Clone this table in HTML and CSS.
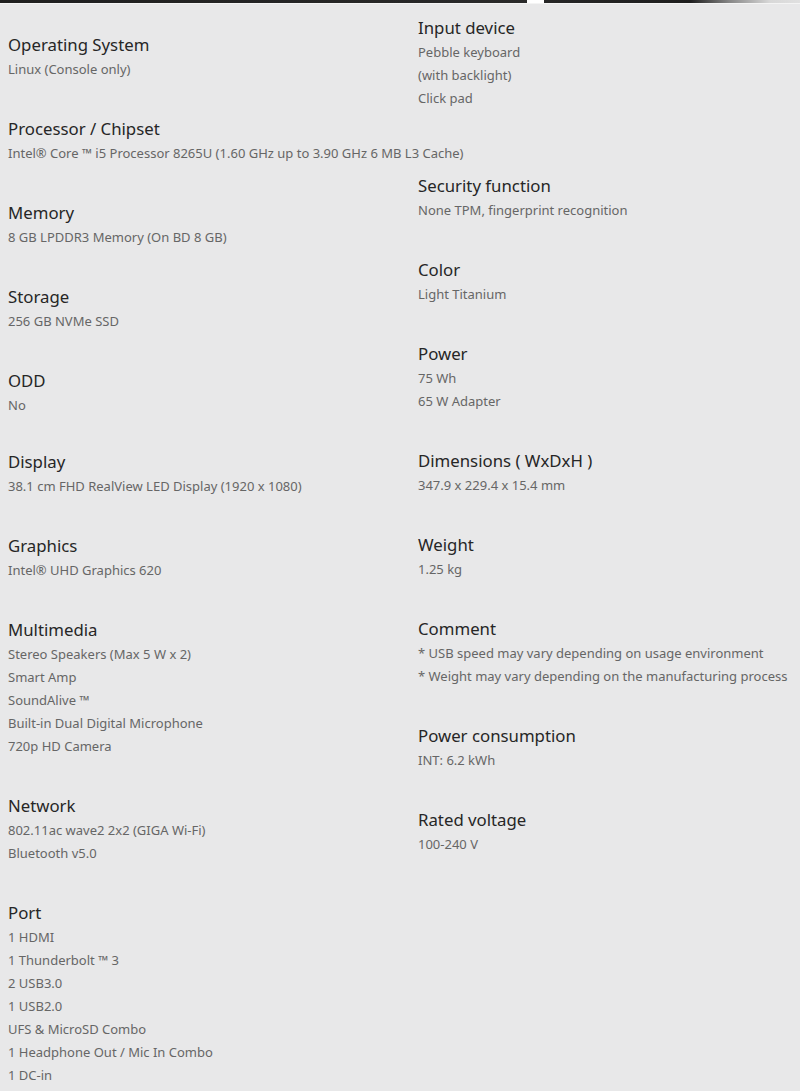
FILE: index.html
```html
<!DOCTYPE html>
<html lang="en">
<head>
<meta charset="utf-8">
<title>Specifications</title>
<link rel="stylesheet" href="styles.css">
</head>
<body>
<div class="topbar"></div>
<main class="specs">
  <section class="col col-left">
    <div class="item">
      <h3>Operating System</h3>
      <p>Linux (Console only)</p>
    </div>
    <div class="item">
      <h3>Processor / Chipset</h3>
      <p>Intel® Core ™ i5 Processor 8265U (1.60 GHz up to 3.90 GHz 6 MB L3 Cache)</p>
    </div>
    <div class="item">
      <h3>Memory</h3>
      <p>8 GB LPDDR3 Memory (On BD 8 GB)</p>
    </div>
    <div class="item">
      <h3>Storage</h3>
      <p>256 GB NVMe SSD</p>
    </div>
    <div class="item item-tight">
      <h3>ODD</h3>
      <p>No</p>
    </div>
    <div class="item">
      <h3>Display</h3>
      <p>38.1 cm FHD RealView LED Display (1920 x 1080)</p>
    </div>
    <div class="item">
      <h3>Graphics</h3>
      <p>Intel® UHD Graphics 620</p>
    </div>
    <div class="item">
      <h3>Multimedia</h3>
      <p>Stereo Speakers (Max 5 W x 2)</p>
      <p>Smart Amp</p>
      <p>SoundAlive ™</p>
      <p>Built-in Dual Digital Microphone</p>
      <p>720p HD Camera</p>
    </div>
    <div class="item">
      <h3>Network</h3>
      <p>802.11ac wave2 2x2 (GIGA Wi-Fi)</p>
      <p>Bluetooth v5.0</p>
    </div>
    <div class="item">
      <h3>Port</h3>
      <p>1 HDMI</p>
      <p>1 Thunderbolt ™ 3</p>
      <p>2 USB3.0</p>
      <p>1 USB2.0</p>
      <p>UFS &amp; MicroSD Combo</p>
      <p>1 Headphone Out / Mic In Combo</p>
      <p>1 DC-in</p>
    </div>
  </section>
  <section class="col col-right">
    <div class="item item-wide">
      <h3>Input device</h3>
      <p>Pebble keyboard</p>
      <p>(with backlight)</p>
      <p>Click pad</p>
    </div>
    <div class="item">
      <h3>Security function</h3>
      <p>None TPM, fingerprint recognition</p>
    </div>
    <div class="item">
      <h3>Color</h3>
      <p>Light Titanium</p>
    </div>
    <div class="item">
      <h3>Power</h3>
      <p>75 Wh</p>
      <p>65 W Adapter</p>
    </div>
    <div class="item">
      <h3>Dimensions ( WxDxH )</h3>
      <p>347.9 x 229.4 x 15.4 mm</p>
    </div>
    <div class="item">
      <h3>Weight</h3>
      <p>1.25 kg</p>
    </div>
    <div class="item">
      <h3>Comment</h3>
      <p>* USB speed may vary depending on usage environment</p>
      <p>* Weight may vary depending on the manufacturing process</p>
    </div>
    <div class="item">
      <h3>Power consumption</h3>
      <p>INT: 6.2 kWh</p>
    </div>
    <div class="item">
      <h3>Rated voltage</h3>
      <p>100-240 V</p>
    </div>
  </section>
</main>
</body>
</html>
```

FILE: styles.css
```css
html, body {
  margin: 0;
  padding: 0;
  background: #e8e8e9;
}
body {
  font-family: "Noto Sans", "Open Sans", sans-serif;
  color: #666;
}
.topbar {
  height: 3px;
  background: linear-gradient(to right,
    #1f1f1f 0, #2a2a2a 527px, #ffffff 527px, #ffffff 544px,
    #262626 544px, #1e1e1e 690px, #888 730px, #d8d8d8 770px, #e0e0e0 800px);
  border-bottom: 1px solid #f4f4f4;
}
.specs {
  display: grid;
  grid-template-columns: 410px 390px;
  align-items: start;
}
.col-left {
  padding: 29px 0 0 8px;
}
.col-right {
  padding: 12px 0 0 8px;
}
.item {
  margin-bottom: 36px;
}
.item-tight {
  margin-bottom: 33px;
}
.item-wide {
  margin-bottom: 64px;
}
h3 {
  margin: 0 0 1px;
  font-size: 16.8px;
  line-height: 24px;
  font-weight: 400;
  color: #262626;
  white-space: nowrap;
}
p {
  margin: 0;
  font-size: 13px;
  line-height: 23px;
  color: #666;
  white-space: nowrap;
}
```
